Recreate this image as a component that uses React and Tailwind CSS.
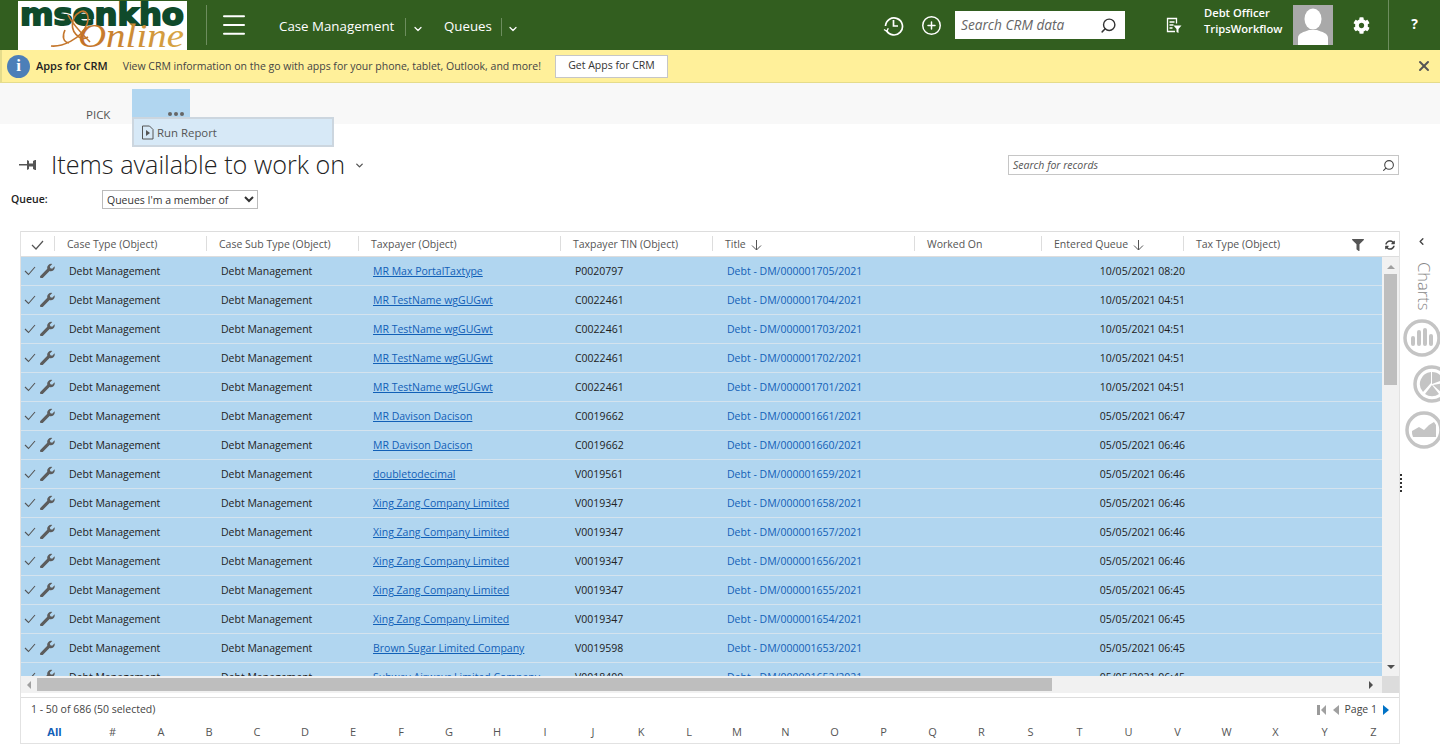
import React from 'react';
import { ChevronDown, ChevronLeft, CirclePlus, Menu, Search, X } from 'lucide-react';
import { FaCog, FaFilter, FaSyncAlt } from 'react-icons/fa';

const FONT = { fontFamily: '"Open Sans", "Noto Sans", sans-serif' };

// selected rows in the queue grid
const rows = [
  ['MR Max PortalTaxtype', 'P0020797', 'Debt - DM/000001705/2021', '10/05/2021 08:20'],
  ['MR TestName wgGUGwt', 'C0022461', 'Debt - DM/000001704/2021', '10/05/2021 04:51'],
  ['MR TestName wgGUGwt', 'C0022461', 'Debt - DM/000001703/2021', '10/05/2021 04:51'],
  ['MR TestName wgGUGwt', 'C0022461', 'Debt - DM/000001702/2021', '10/05/2021 04:51'],
  ['MR TestName wgGUGwt', 'C0022461', 'Debt - DM/000001701/2021', '10/05/2021 04:51'],
  ['MR Davison Dacison', 'C0019662', 'Debt - DM/000001661/2021', '05/05/2021 06:47'],
  ['MR Davison Dacison', 'C0019662', 'Debt - DM/000001660/2021', '05/05/2021 06:46'],
  ['doubletodecimal', 'V0019561', 'Debt - DM/000001659/2021', '05/05/2021 06:46'],
  ['Xing Zang Company Limited', 'V0019347', 'Debt - DM/000001658/2021', '05/05/2021 06:46'],
  ['Xing Zang Company Limited', 'V0019347', 'Debt - DM/000001657/2021', '05/05/2021 06:46'],
  ['Xing Zang Company Limited', 'V0019347', 'Debt - DM/000001656/2021', '05/05/2021 06:46'],
  ['Xing Zang Company Limited', 'V0019347', 'Debt - DM/000001655/2021', '05/05/2021 06:45'],
  ['Xing Zang Company Limited', 'V0019347', 'Debt - DM/000001654/2021', '05/05/2021 06:45'],
  ['Brown Sugar Limited Company', 'V0019598', 'Debt - DM/000001653/2021', '05/05/2021 06:45'],
  ['Subway Airways Limited Company', 'V0018400', 'Debt - DM/000001652/2021', '05/05/2021 06:45'],
];

const columns = [
  { label: 'Case Type (Object)', width: 'w-[152px]' },
  { label: 'Case Sub Type (Object)', width: 'w-[152px]' },
  { label: 'Taxpayer (Object)', width: 'w-[202px]' },
  { label: 'Taxpayer TIN (Object)', width: 'w-[152px]' },
  { label: 'Title', width: 'w-[202px]', sorted: true },
  { label: 'Worked On', width: 'w-[127px]' },
  { label: 'Entered Queue', width: 'w-[142px]', sorted: true },
  { label: 'Tax Type (Object)', width: 'w-[130px]' },
];

const letters = ['#', ...'ABCDEFGHIJKLMNOPQRSTUVWXYZ'];

function Logo() {
  return (
    <svg width="169" height="49" viewBox="0 0 169 49" className="shrink-0 bg-white">
      <defs>
        <linearGradient id="onlineFill" x1="0" x2="1" y1="0" y2="0">
          <stop offset="0" stopColor="#c26f27" />
          <stop offset="1" stopColor="#d8a846" />
        </linearGradient>
      </defs>
      <text x="2" y="24" textLength="164" lengthAdjust="spacingAndGlyphs" fontFamily="DejaVu Sans" fontWeight="700" fontSize="31" fill="#0f4a2b" stroke="#0f4a2b" strokeWidth="1.8">
        msenkho
      </text>
      <text x="60" y="46" textLength="106" lengthAdjust="spacingAndGlyphs" fontFamily="Liberation Serif" fontStyle="italic" fontSize="34" fill="url(#onlineFill)">
        Online
      </text>
      <path d="M33 45c10 1 30-6 36-22 3-9-1-15-7-12-9 5-11 18-1 25 3 2 6 2 9 0M50 14c4 8 14 19 22 27M47 29c-3 6-2 12 4 13" fill="none" stroke="#c4762c" strokeWidth="1.6" />
    </svg>
  );
}

function Avatar() {
  return (
    <svg width="40" height="40" viewBox="0 0 40 40" className="shrink-0 bg-[#a9a9a9]">
      <ellipse cx="20" cy="14" rx="8.5" ry="10.5" fill="#fff" />
      <path d="M5 40v-7c0-5 6-6 11-8h8c5 2 11 3 11 8v7z" fill="#fff" />
    </svg>
  );
}

function AdvancedFindIcon() {
  return (
    <svg width="17" height="17" viewBox="0 0 17 17" fill="none" stroke="#fff" strokeWidth="1.3">
      <path d="M10 14.5H2.500v-13h9v5M4.500 5h5M4.500 8h4M4.500 11h3" />
      <path d="M8.500 8.500h8l-3 3.500v4l-2-1v-3z" fill="#fff" stroke="none" />
    </svg>
  );
}

// clock with the return arrow at its lower left
function RecentIcon() {
  return (
    <svg width="21" height="21" viewBox="0 0 21 21" fill="none" stroke="#fff" strokeWidth="1.7">
      <path d="M3.500 15.500a8.500 8.500 0 1 0-1-4.500" />
      <path d="M10.500 5v6h4.500" />
      <path d="M1 14.500l2.800 1.800 1.500-3" strokeWidth="1.400" />
    </svg>
  );
}

function WrenchIcon() {
  return (
    <svg width="15" height="15" viewBox="0 0 15 15" fill="#5c5c5c" className="mb-[4px] ml-[4px]">
      <path d="M0.500 12.800l6.800-7a4 4 0 0 1 5-4.800l-2.500 2.400 0.600 1.800 1.800 0.500 2.400-2.400a4 4 0 0 1-5 4.800l-6.900 6.800a1.200 1.200 0 0 1-2.200-2.100z" />
    </svg>
  );
}

function TopBar() {
  return (
    <header className="flex h-[50px] items-center bg-[#325e1f] text-white">
      <div className="flex h-full items-center pl-[18px]">
        <Logo />
      </div>
      <div className="ml-[19px] h-[40px] w-px bg-[#6d8d5e]" />
      <Menu size={30} strokeWidth={1.6} className="ml-[12px]" />
      <div className="ml-[30px] mt-[4px] flex items-center text-[13.3px]">
        <span className="w-[116px] whitespace-nowrap">Case Management</span>
        <span className="ml-[10px] h-[18px] w-px bg-[#6d8d5e]" />
        <ChevronDown size={12} strokeWidth={2.5} className="ml-[6px] mt-1" />
        <span className="ml-[20px] whitespace-nowrap">Queues</span>
        <span className="ml-[9px] h-[18px] w-px bg-[#6d8d5e]" />
        <ChevronDown size={12} strokeWidth={2.5} className="ml-[5px] mt-1" />
      </div>
      <div className="ml-auto flex h-full items-center">
        <RecentIcon />
        <CirclePlus size={21} strokeWidth={1.7} className="ml-[17px]" />
        <div className="ml-[13px] flex h-[28px] w-[170px] items-center justify-between bg-white pl-[6px] pr-[8px]">
          <span className="text-[13.7px] italic text-[#666666]">Search CRM data</span>
          <Search size={17} strokeWidth={2} className="-scale-x-100 text-[#333333]" />
        </div>
        <div className="ml-[40px]">
          <AdvancedFindIcon />
        </div>
        <div className="mb-[9px] ml-[22px] w-[89px] text-[11.200px] font-semibold leading-[16px]">
          <div>Debt Officer</div>
          <div className="whitespace-nowrap">TripsWorkflow</div>
        </div>
        <div className="mb-[5px] self-end">
          <Avatar />
        </div>
        <FaCog size={17} className="ml-[20px]" />
        <div className="ml-[18px] h-full w-px bg-[#6d8d5e]" />
        <span className="mb-[3px] w-[51px] text-center text-[14px] font-bold">?</span>
      </div>
    </header>
  );
}

function Notification() {
  return (
    <div className="flex h-[33px] items-center border-b border-l-2 border-[#e5dc8b] bg-[#fff09a] pl-[5px] pr-[8px] text-[10.500px] text-[#444444]">
      <span className="flex h-[23px] w-[23px] items-center justify-center rounded-full bg-[#4c7fb8] text-[17px] font-bold text-white" style={{ fontFamily: 'Liberation Serif' }}>
        i
      </span>
      <span className="ml-[6px] mt-[1px] whitespace-nowrap text-[11px] font-semibold text-[#222222]">Apps for CRM</span>
      <span className="ml-[15px] mt-[1px] whitespace-nowrap">View CRM information on the go with apps for your phone, tablet, Outlook, and more!</span>
      <button className="ml-[14px] h-[23px] w-[113px] border border-[#c6c6c6] bg-white text-[10.500px] text-[#333333]">Get Apps for CRM</button>
      <X size={16} strokeWidth={3} className="ml-auto text-[#555555]" />
    </div>
  );
}

function CommandBar() {
  return (
    <div className="relative flex h-[41px] items-end bg-[#f8f8f8] text-[12px] text-[#555555]">
      <span className="ml-[86px] w-[46px] text-[11.500px] leading-[18px]">PICK</span>
      <div className="relative mt-[6px] flex h-[34px] w-[58px] items-end justify-end gap-[2px] self-start bg-[#b1d6f0] pb-[7px] pr-[6px]">
        <i className="h-[4px] w-[4px] rounded-full bg-[#666666]" />
        <i className="h-[4px] w-[4px] rounded-full bg-[#666666]" />
        <i className="h-[4px] w-[4px] rounded-full bg-[#666666]" />
      </div>
      {/* open flyout from the ... button */}
      <div className="absolute left-[132px] top-[34px] z-10 flex h-[30px] w-[202px] items-center border-2 border-[#ccd6df] bg-[#d7e9f7] pl-[7px] text-[#555555]">
        <svg width="13" height="15" viewBox="0 0 13 15" fill="none" stroke="#555555">
          <path d="M1.500 1h7l3.500 3.500V14h-10.500z" />
          <path d="M5 5l4 3-4 3z" fill="#555555" stroke="none" />
        </svg>
        <span className="ml-[3px] mt-[2px] text-[11.400px]">Run Report</span>
      </div>
    </div>
  );
}

function ScrollArrow({ dir }) {
  const shape = {
    up: 'border-x-[4px] border-b-[4px] border-x-transparent border-b-[#a0a0a0]',
    down: 'border-x-[4px] border-t-[4px] border-x-transparent border-t-[#505050]',
    left: 'border-y-[4px] border-r-[4px] border-y-transparent border-r-[#a0a0a0]',
    right: 'border-y-[4px] border-l-[4px] border-y-transparent border-l-[#505050]',
  };
  return <i className={`block h-0 w-0 ${shape[dir]}`} />;
}

function Grid() {
  return (
    <section className="ml-[20px] w-[1380px] border-x border-[#e2e2e2]">
      {/* header */}
      <div className="flex h-[26px] items-center border-y border-[#dddddd] bg-white pt-[2px] text-[10.500px] text-[#555555]">
        <div className="flex w-[46px] items-center">
          <svg width="13" height="10" viewBox="0 0 13 10" fill="none" stroke="#555555" strokeWidth="1.2" className="ml-[10px]">
            <path d="M1 5l4 4 7-8" />
          </svg>
        </div>
        {columns.map((col) => (
          <div key={col.label} className={`relative flex h-full shrink-0 items-center whitespace-nowrap ${col.width}`}>
            <span className="absolute -left-[13px] top-[2px] h-[15px] w-px bg-[#dddddd]" />
            {col.label}
            {col.sorted && (
              <svg width="11" height="11" viewBox="0 0 11 11" fill="none" stroke="#555555" className="ml-[5px]">
                <path d="M5.500 0v10M1 5.500l4.500 4.500 4.500-4.500" />
              </svg>
            )}
          </div>
        ))}
        <FaFilter size={12} className="ml-[26px] text-[#555555]" />
        <FaSyncAlt size={10} className="ml-[21px] text-[#444444]" />
      </div>

      {/* body */}
      <div className="flex h-[419px] overflow-hidden">
        <div className="h-full w-[1361px] overflow-hidden">
          {rows.map((row) => (
            <div key={row[2]} className="flex h-[29px] items-center border-b border-[#d4e3ee] bg-[#b1d6f0] pt-[2px] text-[10.500px] text-[#222222]">
              <div className="flex w-[48px] shrink-0 items-center">
                <svg width="12" height="10" viewBox="0 0 12 10" fill="none" stroke="#555555" strokeWidth="1.1" className="mb-[3px] ml-[3px]">
                  <path d="M1 5l3.500 3.500L11 1" />
                </svg>
                <WrenchIcon />
              </div>
              <span className="w-[152px] shrink-0">Debt Management</span>
              <span className="w-[152px] shrink-0">Debt Management</span>
              <span className="w-[202px] shrink-0 whitespace-nowrap text-[#1160b7] underline">{row[0]}</span>
              <span className="w-[152px] shrink-0">{row[1]}</span>
              <span className="w-[202px] shrink-0 text-[#1160b7]">{row[2]}</span>
              <span className="w-[256px] shrink-0 text-right">{row[3]}</span>
            </div>
          ))}
        </div>
        <div className="flex h-full w-[17px] flex-col items-center bg-[#f1f1f1]">
          <div className="mt-[8px]"><ScrollArrow dir="up" /></div>
          <div className="mt-[5px] h-[111px] w-[13px] bg-[#bebebe]" />
          <div className="mb-[7px] mt-auto"><ScrollArrow dir="down" /></div>
        </div>
      </div>
      <div className="flex h-[17px] items-center bg-[#f1f1f1]">
        <div className="flex w-[16px] justify-center"><ScrollArrow dir="left" /></div>
        <div className="h-[13px] w-[1015px] bg-[#bebebe]" />
        <div className="ml-auto mr-[9px]"><ScrollArrow dir="right" /></div>
        <div className="h-full w-[17px] bg-[#dcdcdc]" />
      </div>

      {/* footer */}
      <div className="mt-[4px] flex h-[24px] items-center justify-between border-t border-[#dddddd] pl-[10px] pr-[10px] text-[10.500px] text-[#444444]">
        <span>1 - 50 of 686 (50 selected)</span>
        <div className="flex items-center">
          <i className="h-[10px] w-[3px] bg-[#9a9a9a]" />
          <i className="ml-[1px] mr-[7px] block h-0 w-0 border-y-[5px] border-r-[5px] border-y-transparent border-r-[#a0a0a0]" />
          <i className="block h-0 w-0 border-y-[5px] border-r-[6px] border-y-transparent border-r-[#a0a0a0]" />
          <span className="mx-[6px]">Page 1</span>
          <i className="block h-0 w-0 border-y-[5px] border-l-[6px] border-y-transparent border-l-[#0072c6]" />
        </div>
      </div>
      <div className="flex h-[23px] items-center border-b border-[#e2e2e2] text-[11px] text-[#555555]">
        <span className="w-[67px] text-center font-bold text-[#1160b7]">All</span>
        {letters.map((letter, i) => (
          <span key={letter} className={`shrink-0 text-center ${i >= 1 && i < 14 ? 'w-[48px]' : 'w-[49px]'}`}>{letter}</span>
        ))}
      </div>
    </section>
  );
}

function ChartRound({ children, offset }) {
  return (
    <svg width="38" height="38" viewBox="0 0 38 38" className={`shrink-0 ${offset}`} fill="#c4c4c4">
      <circle cx="19" cy="19" r="17" fill="none" stroke="#c4c4c4" strokeWidth="3.500" />
      {children}
    </svg>
  );
}

function ChartsPane() {
  return (
    <aside className="flex w-[40px] shrink-0 flex-col overflow-hidden text-[#888888]">
      <ChevronLeft size={11} strokeWidth={3} className="ml-[16px] mt-[5px] text-[#444444]" />
      <span className="ml-[13px] mt-[15px] self-start text-[16.500px] font-light leading-[22px] [writing-mode:vertical-rl]">Charts</span>
      <div className="mt-[9px] flex flex-col gap-[8px]">
        <ChartRound offset="ml-[3px]">
          <rect x="8" y="17" width="4" height="10" rx="2" />
          <rect x="14" y="11" width="4" height="16" rx="2" />
          <rect x="20" y="9" width="4" height="18" rx="2" />
          <rect x="26" y="15" width="4" height="12" rx="2" />
        </ChartRound>
        <ChartRound offset="ml-[13px]">
          <path d="M19 7a12 12 0 0 1 11 8l-11 4zM31 18a12 12 0 0 1-3 9l-8-7zM26 29a12 12 0 0 1-14 0l7-9zM10 27a12 12 0 0 1 8-20v11z" />
        </ChartRound>
        <ChartRound offset="ml-[5px]">
          <path d="M7 20l7-4 5 3 5-5 5-3 2 3v12H8a12 12 0 0 1-1-6z" />
        </ChartRound>
      </div>
      <div className="mt-[25px] flex w-[2px] flex-col gap-[2px]">
        {[0, 1, 2, 3, 4].map((n) => (
          <i key={n} className="h-[2px] w-[2px] bg-[#333333]" />
        ))}
      </div>
    </aside>
  );
}

export default function App() {
  return (
    <div className="h-[745px] w-[1440px] overflow-hidden bg-white" style={FONT}>
      <TopBar />
      <Notification />
      <CommandBar />

      {/* view selector */}
      <div className="flex h-[66px] items-center pl-[19px] pt-[16px]">
        <svg width="18" height="12" viewBox="0 0 18 12" fill="#555555">
          <path d="M0 5h8V6.500H0zM8 1l2 1v2.500h4V2l2-1h1v10h-1l-2-1V7.500h-4V10l-2 1z" />
        </svg>
        <h1 className="ml-[14px] text-[25.200px] font-light leading-none text-[#222222]">Items available to work on</h1>
        <ChevronDown size={11} strokeWidth={3} className="ml-[9px] text-[#555555]" />
        <div className="ml-auto mr-[41px] flex h-[20px] w-[391px] items-center justify-between border border-[#c6c6c6] pl-[4px] pr-[3px]">
          <span className="mt-[1px] text-[10.500px] italic text-[#555555]">Search for records</span>
          <Search size={13} strokeWidth={2} className="-scale-x-100 text-[#444444]" />
        </div>
      </div>
      <div className="flex h-[19px] items-center pl-[11px] text-[10.500px]">
        <label className="w-[91px] font-semibold text-[#222222]">Queue:</label>
        <select className="h-[19px] w-[156px] border border-[#bbbbbb] bg-white text-[10.500px] text-[#333333]" defaultValue="member">
          <option value="member">Queues I'm a member of</option>
        </select>
      </div>

      <div className="mt-[22px] flex">
        <Grid />
        <ChartsPane />
      </div>
    </div>
  );
}
